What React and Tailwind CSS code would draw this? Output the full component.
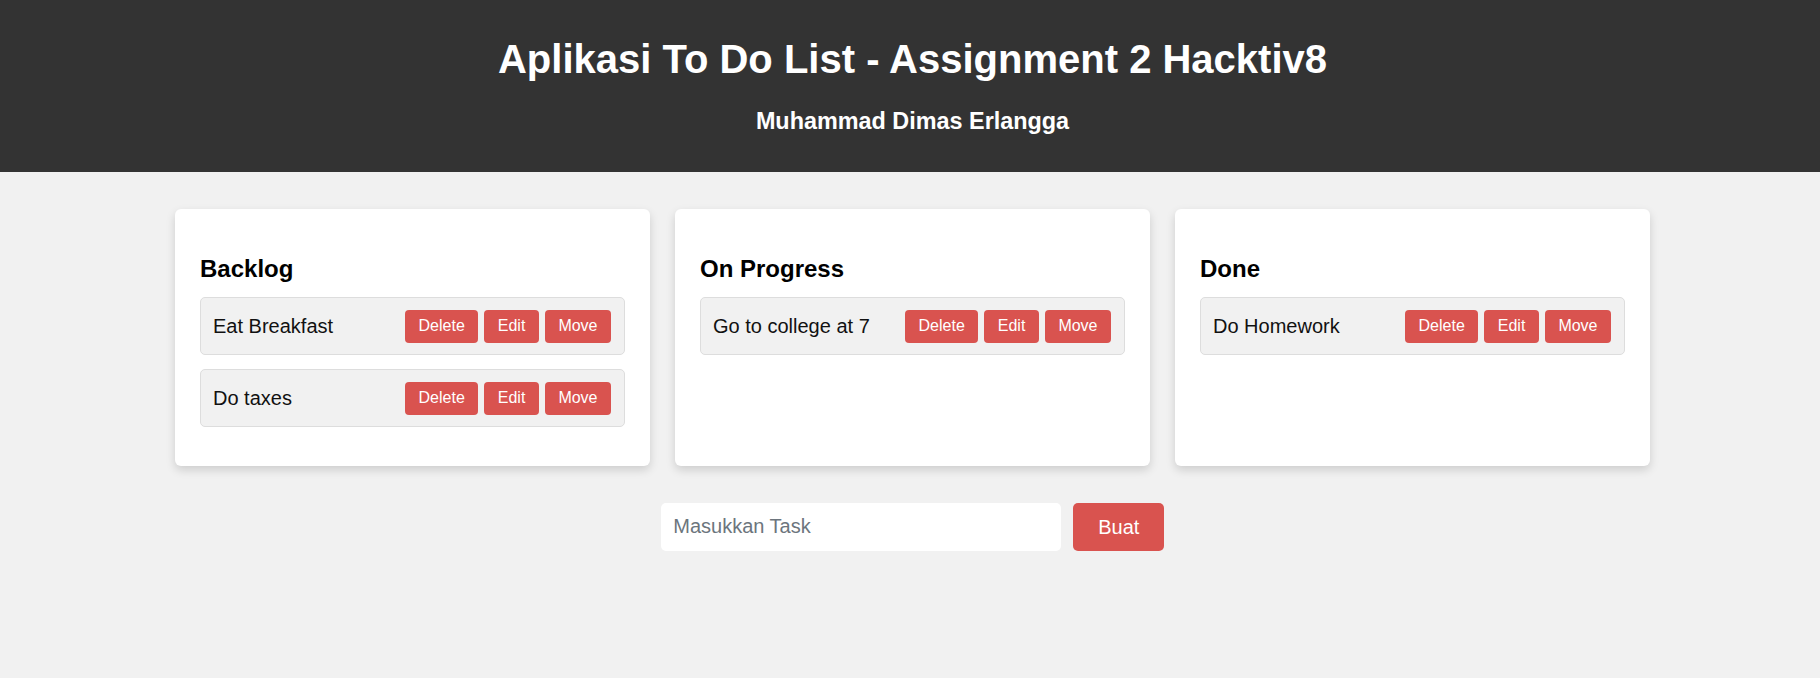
const columns = [
  { title: 'Backlog', tasks: ['Eat Breakfast', 'Do taxes'] },
  { title: 'On Progress', tasks: ['Go to college at 7'] },
  { title: 'Done', tasks: ['Do Homework'] },
];

function TaskItem({ text }) {
  return (
    <div className="flex items-center justify-between border border-[#dddddd] bg-[#f1f1f1] rounded-[5px] pl-[12px] pr-[13px] py-[11.5px] mb-[14px]">
      <span className="text-[20px] text-[#111]">{text}</span>
      <div className="flex gap-[6px]">
        {['Delete', 'Edit', 'Move'].map((label) => (
          <button
            key={label}
            className="bg-[#d9534f] text-white text-[16px] leading-[18px] px-[13.5px] py-[7.5px] rounded-[4px]"
          >
            {label}
          </button>
        ))}
      </div>
    </div>
  );
}

function Column({ title, tasks }) {
  return (
    <div className="w-[475px] h-[257px] bg-white rounded-[6px] shadow-[0_4px_10px_rgba(0,0,0,0.15)] px-[25px] pt-[44px]">
      <h2 className="text-[24px] leading-[32px] font-bold text-black mb-[12px]">{title}</h2>
      {tasks.map((t) => (
        <TaskItem key={t} text={t} />
      ))}
    </div>
  );
}

export default function App() {
  return (
    <div className="min-h-[678px] bg-[#f1f1f1] font-['Liberation_Sans',Arial,sans-serif]">
      <header className="bg-[#333333] text-white text-center h-[172px] pt-[36px] pl-[5px]">
        <h1 className="text-[40px] leading-[46px] font-bold">Aplikasi To Do List - Assignment 2 Hacktiv8</h1>
        <h3 className="text-[23.4px] leading-[27px] font-bold mt-[26px]">Muhammad Dimas Erlangga</h3>
      </header>

      <main className="pl-[5px]">
        <div className="flex justify-center gap-[25px] pt-[37px]">
          {columns.map((c) => (
            <Column key={c.title} title={c.title} tasks={c.tasks} />
          ))}
        </div>

        <div className="flex justify-center gap-[12.5px] mt-[37px]">
          <input
            type="text"
            placeholder="Masukkan Task"
            className="w-[400px] h-[47.5px] bg-white rounded-[5px] px-[12.5px] text-[20px] placeholder:text-[#6c757d] outline-none"
          />
          <button className="w-[91px] h-[47.5px] bg-[#d9534f] text-white text-[20px] rounded-[5px]">Buat</button>
        </div>
      </main>
    </div>
  );
}
